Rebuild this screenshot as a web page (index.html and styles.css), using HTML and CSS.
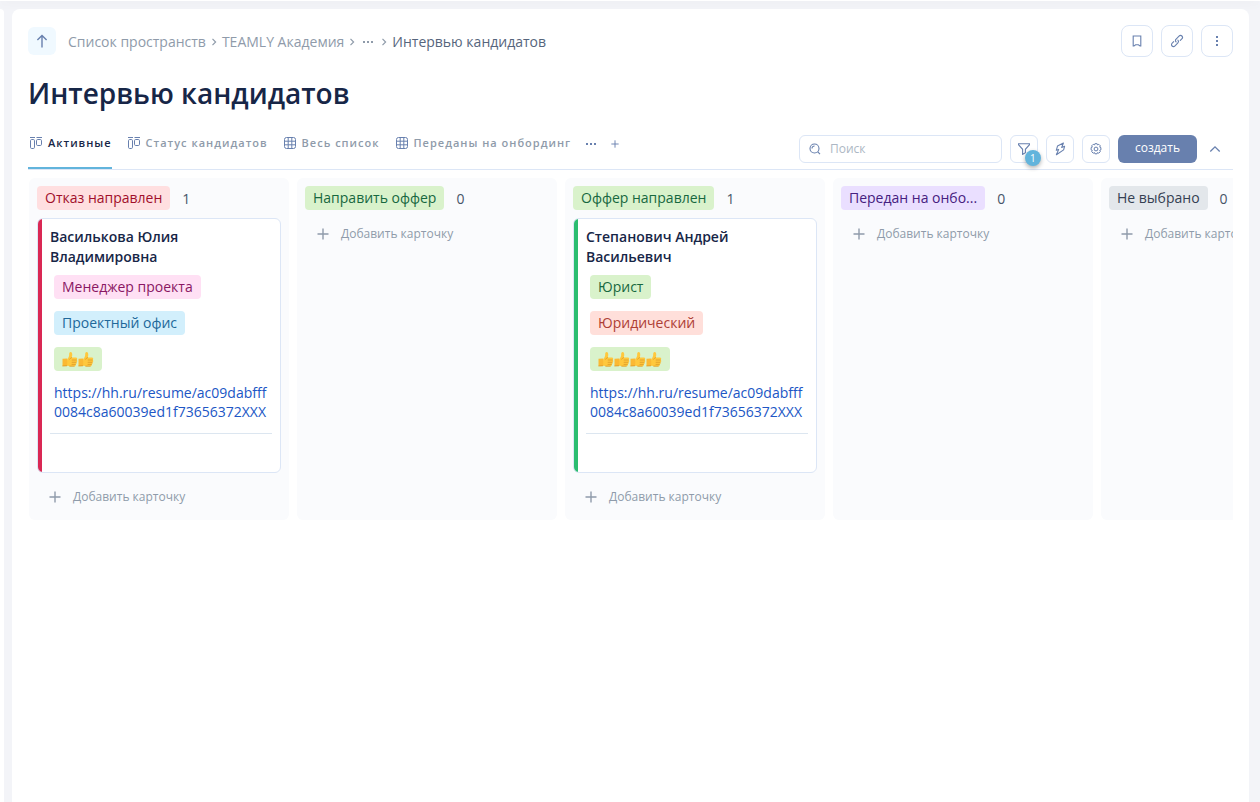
FILE: index.html
```html
<!DOCTYPE html>
<html lang="ru">
<head>
<meta charset="utf-8">
<meta name="viewport" content="width=device-width, initial-scale=1">
<title>Интервью кандидатов</title>
<link rel="stylesheet" href="styles.css">
</head>
<body>
<svg class="sprite" aria-hidden="true">
  <symbol id="chevron" viewBox="0 0 6 8"><path d="M1.5 .8 4.6 4 1.5 7.2" fill="none" stroke="currentColor" stroke-width="1.2"/></symbol>
  <symbol id="dots" viewBox="0 0 12 4"><path d="M1 1h2v2H1zM5 1h2v2H5zM9 1h2v2H9z" fill="currentColor"/></symbol>
  <symbol id="plus" viewBox="0 0 12 12"><path d="M6 .5v11M.5 6h11" fill="none" stroke="currentColor" stroke-width="1.4"/></symbol>
  <symbol id="kanban" viewBox="0 0 12 12"><path d="M0 .5h5M6.500 .5h5.500" stroke="currentColor" fill="none"/><rect x=".5" y="2.500" width="4" height="9" rx="1.200" fill="none" stroke="currentColor"/><rect x="6.500" y="2.500" width="5" height="6" rx="1.200" fill="none" stroke="currentColor"/></symbol>
  <symbol id="grid" viewBox="0 0 12 12"><rect x=".5" y=".5" width="11" height="11" rx="2" fill="none" stroke="currentColor"/><path d="M4.200.5v11M7.800.5v11M.5 4.200h11M.5 7.800h11" stroke="currentColor" fill="none"/></symbol>
  <symbol id="thumb" viewBox="0 0 16 16"><path d="M5.2 8.2C6.7 6.8 7.3 5 7.2 3 7.1.6 9.8.2 10.2 2.9c.2 1.3-.2 2.5-.6 3.7h4.3c1.5 0 1.8 1.9.6 2.3 1.2.5 1 2.2-.3 2.4.8.6.5 1.9-.6 2.1.4.9-.2 1.8-1.3 1.8H7.8c-1.4 0-2-.6-3.2-.7z" fill="#ffc83d"/><path d="M.5 7.8 5.2 7.6v7.3L.5 15.1z" fill="#fbb934"/><path d="M10.2 9h4.2M10.1 11.3h4M10 13.4h3.4M9.6 6.6c-.7.3-1.6.8-2 1.6M7.8 15.2h4.4M.8 15l3.8-.2" fill="none" stroke="#dc9a2a" stroke-width=".8" stroke-linecap="round"/></symbol>
</svg>
<div class="topbar"></div>
<div class="shell">
  <aside class="sidebar"></aside>
  <main class="page">
    <header class="header">
      <button class="up" aria-label="Наверх"><svg width="12" height="14" viewBox="0 0 12 14"><path d="M6 13.5V1.8M1.4 6 6 1.4 10.6 6" fill="none" stroke="currentColor" stroke-width="1.4"/></svg></button>
      <nav class="crumbs" aria-label="Навигация">
        <a href="#">Список пространств</a>
        <svg class="chevron"><use href="#chevron"/></svg>
        <a href="#">TEAMLY Академия</a>
        <svg class="chevron"><use href="#chevron"/></svg>
        <button class="more" aria-label="Ещё"><svg class="dots"><use href="#dots"/></svg></button>
        <svg class="chevron"><use href="#chevron"/></svg>
        <span class="current">Интервью кандидатов</span>
      </nav>
      <div class="actions">
        <button class="action" aria-label="Закладка"><svg width="10" height="12" viewBox="0 0 10 12"><path d="M1.2 1h7.6v10H8L6.4 9.8H3.6L2 11h-.8z" fill="none" stroke="currentColor" stroke-width="1.1"/></svg></button>
        <button class="action" aria-label="Ссылка"><svg width="14" height="14" viewBox="0 0 14 14"><g fill="none" stroke="currentColor" stroke-width="1.1" stroke-linecap="round"><path d="M6.1 7.9c-.9-1-.8-2 0-2.8l2.9-3c1-1 2.2-.8 2.900-.1s.9 1.900-.1 2.900L10.300 6.400"/><path d="M7.900 6.100c.9 1 .8 2 0 2.800l-2.900 3c-1 1-2.200.8-2.900.1s-.9-1.900.1-2.900L3.700 7.600"/></g></svg></button>
        <button class="action" aria-label="Меню"><svg width="4" height="12" viewBox="0 0 4 12"><path d="M1 1h2v2H1zM1 5h2v2H1zM1 9h2v2H1z" fill="currentColor"/></svg></button>
      </div>
    </header>
    <h1 class="title">Интервью кандидатов</h1>
    <div class="toolbar">
      <nav class="tabs" aria-label="Представления">
        <button class="tab active"><svg class="tab-icon"><use href="#kanban"/></svg>Активные</button>
        <button class="tab"><svg class="tab-icon"><use href="#kanban"/></svg>Статус кандидатов</button>
        <button class="tab"><svg class="tab-icon"><use href="#grid"/></svg>Весь список</button>
        <button class="tab"><svg class="tab-icon"><use href="#grid"/></svg>Переданы на онбординг</button>
        <button class="tab extra" aria-label="Ещё"><svg class="dots"><use href="#dots"/></svg></button>
        <button class="tab extra" aria-label="Добавить представление"><svg class="plus-small"><use href="#plus"/></svg></button>
      </nav>
      <div class="tools">
        <label class="search"><svg width="12" height="12" viewBox="0 0 12 12"><circle cx="5.500" cy="5.500" r="4.500" fill="none" stroke="currentColor" stroke-width="1.100"/><path d="m8.800 8.800 2.200 2.400M3 5.600A2.500 2.500 0 0 1 5.600 3" fill="none" stroke="currentColor" stroke-width="1.100"/></svg><input type="text" placeholder="Поиск" aria-label="Поиск"></label>
        <button class="tool" aria-label="Фильтр"><svg width="12" height="12" viewBox="0 0 12 12"><path d="M.5.7h11v1L7.400 6.300v3.400l-2.800 1.700V6.300L.5 1.700z" fill="none" stroke="currentColor" stroke-width="1.100"/></svg><span class="badge">1</span></button>
        <button class="tool" aria-label="Автоматизация"><svg width="12" height="14" viewBox="0 0 12 14"><path d="M9.400 1 3.500 4.100 2.300 8.300l2.400-.9-2.300 5.400 7.200-4.900 1-3.600-2.900 1.200z" fill="none" stroke="currentColor" stroke-width="1.100" stroke-linejoin="round"/></svg></button>
        <button class="tool" aria-label="Настройки"><svg width="12" height="12" viewBox="0 0 12 12"><path d="M4.900.7h2.200l.4 1.200 1.300-.6 1.500 1.500-.6 1.300 1.200.5v2.300l-1.200.5.6 1.300-1.500 1.500-1.300-.6-.4 1.200H4.900l-.4-1.200-1.300.6-1.500-1.500.6-1.300-1.200-.5V4.600l1.200-.5-.6-1.300 1.500-1.500 1.300.6z" fill="none" stroke="currentColor" stroke-width="1"/><circle cx="6" cy="6" r="1.900" fill="none" stroke="currentColor" stroke-width="1"/></svg></button>
        <button class="create">создать</button>
        <button class="collapse" aria-label="Свернуть"><svg width="12" height="8" viewBox="0 0 12 8"><path d="M1.300 6.500 6 1.800l4.700 4.700" fill="none" stroke="currentColor" stroke-width="1.300"/></svg></button>
      </div>
    </div>
    <div class="board">
      <section class="column">
        <div class="column-head"><span class="tag red">Отказ направлен</span><span class="count">1</span></div>
        <article class="card rejected">
          <h2 class="name">Василькова Юлия Владимировна</h2>
          <div class="fields">
            <span class="tag pink">Менеджер проекта</span>
            <span class="tag blue">Проектный офис</span>
            <span class="tag green thumbs" role="img" aria-label="Оценка 2"><svg><use href="#thumb"/></svg><svg><use href="#thumb"/></svg></span>
            <a class="link" href="#">https://hh.ru/resume/ac09dabfff0084c8a60039ed1f73656372XXX</a>
          </div>
        </article>
        <button class="add"><svg><use href="#plus"/></svg>Добавить карточку</button>
      </section>
      <section class="column">
        <div class="column-head"><span class="tag green">Направить оффер</span><span class="count">0</span></div>
        <button class="add"><svg><use href="#plus"/></svg>Добавить карточку</button>
      </section>
      <section class="column">
        <div class="column-head"><span class="tag green">Оффер направлен</span><span class="count">1</span></div>
        <article class="card offered">
          <h2 class="name">Степанович Андрей Васильевич</h2>
          <div class="fields">
            <span class="tag green">Юрист</span>
            <span class="tag coral">Юридический</span>
            <span class="tag green thumbs" role="img" aria-label="Оценка 4"><svg><use href="#thumb"/></svg><svg><use href="#thumb"/></svg><svg><use href="#thumb"/></svg><svg><use href="#thumb"/></svg></span>
            <a class="link" href="#">https://hh.ru/resume/ac09dabfff0084c8a60039ed1f73656372XXX</a>
          </div>
        </article>
        <button class="add"><svg><use href="#plus"/></svg>Добавить карточку</button>
      </section>
      <section class="column">
        <div class="column-head"><span class="tag violet">Передан на онбо...</span><span class="count">0</span></div>
        <button class="add"><svg><use href="#plus"/></svg>Добавить карточку</button>
      </section>
      <section class="column">
        <div class="column-head"><span class="tag gray">Не выбрано</span><span class="count">0</span></div>
        <button class="add"><svg><use href="#plus"/></svg>Добавить карточку</button>
      </section>
    </div>
  </main>
</div>
</body>
</html>
```
FILE: styles.css
```css
* { box-sizing: border-box; }

body {
  margin: 0;
  min-height: 100vh;
  display: flex;
  flex-direction: column;
  overflow: hidden;
  background: #f3f4f8;
  color: #172647;
  font: 14px/20px "Open Sans", "Noto Sans", sans-serif;
}

button {
  display: inline-flex;
  align-items: center;
  justify-content: center;
  padding: 0;
  border: 0;
  background: none;
  color: #6880ae;
  font: inherit;
}

a { text-decoration: none; }
svg { display: block; flex: none; }
.sprite { position: absolute; width: 0; height: 0; }

.topbar {
  height: 1px;
  background: #fff;
  box-shadow: 0 1px 10px rgba(0, 0, 0, .15);
}

.shell {
  flex: 1;
  display: grid;
  grid-template-columns: 4px minmax(0, 1fr);
  gap: 8px;
  padding: 8px 11px 0 0;
}

.sidebar {
  position: relative;
  background: #fff;
  border-radius: 0 8px 0 0;
}

.page {
  position: relative;
  padding: 16px 16px 0;
  background: #fff;
  border-radius: 8px 8px 0 0;
}

.header { display: flex; align-items: center; }

.up {
  width: 28px;
  height: 28px;
  border-radius: 6px;
  background: #f0f9ff;
}

.crumbs {
  display: flex;
  align-items: center;
  gap: 5px;
  margin-left: 12px;
  padding-top: 2px;
  color: #8f9baa;
}
.crumbs a { color: #8f9baa; }
.crumbs .current { color: #56657c; }
.chevron { width: 6px; height: 8px; }
.more { margin: 0 2px; color: #8f9baa; }
.dots { width: 12px; height: 4px; }

.actions { display: flex; gap: 8px; margin-left: auto; }
.action {
  width: 32px;
  height: 32px;
  border: 1px solid #dce6f6;
  border-radius: 8px;
}

.title {
  margin: 16px 0 18px;
  font-size: 28px;
  line-height: 40px;
  font-weight: 600;
}

.toolbar {
  display: flex;
  justify-content: space-between;
  border-bottom: 1px solid #dce6f6;
}

.tabs { display: flex; gap: 14px; }
.tab {
  gap: 6px;
  padding-bottom: 13px;
  border-bottom: 2px solid transparent;
  color: #8f9baa;
  font-size: 11px;
  font-weight: 600;
  letter-spacing: 1px;
  white-space: nowrap;
}
.tab.active { border-color: #62b4dc; color: #172647; }
.tab-icon { width: 12px; height: 12px; margin-left: 2px; color: #6880ae; }
.tab.extra { padding-bottom: 11px; color: #6880ae; }
.plus-small { width: 8px; height: 8px; }

.tools { display: flex; gap: 8px; padding: 4px 8px 6px 0; }
.search {
  display: flex;
  align-items: center;
  gap: 9px;
  width: 203px;
  height: 28px;
  padding: 0 9px;
  border: 1px solid #dce6f6;
  border-radius: 6px;
  color: #6880ae;
}
.search input {
  flex: 1;
  min-width: 0;
  padding: 0;
  border: 0;
  outline: 0;
  background: none;
  font: 12px/20px "Open Sans", "Noto Sans", sans-serif;
}
.search input::placeholder { color: #adb7c4; }

.tool {
  position: relative;
  width: 28px;
  height: 28px;
  border: 1px solid #dce6f6;
  border-radius: 6px;
}
.badge {
  position: absolute;
  top: 14px;
  left: 14px;
  width: 16px;
  height: 16px;
  border-radius: 50%;
  background: #62b4dc;
  box-shadow: 0 2px 4px rgba(0, 0, 0, .3);
  color: #fff;
  font-size: 10px;
  line-height: 16px;
  text-align: center;
}
.create {
  height: 28px;
  padding: 0 17px 2px;
  border-radius: 6px;
  background: #6880ae;
  color: #fff;
  font-size: 12px;
  font-weight: 500;
}
.collapse { width: 20px; }

.board {
  display: flex;
  align-items: stretch;
  gap: 8px;
  padding: 8px 0 0 1px;
  overflow: hidden;
}
.column {
  flex: none;
  width: 260px;
  padding: 8px 8px 12px;
  border-radius: 6px;
  background: #fafbfd;
}
.column-head { display: flex; align-items: center; gap: 12px; }
.count { padding-top: 2px; color: #475569; }

.tag {
  display: inline-flex;
  align-items: center;
  height: 24px;
  padding: 0 8px;
  border-radius: 4px;
  white-space: nowrap;
}
.red { background: #ffdfe0; color: #a10f2b; }
.green { background: #d9f2cb; color: #17683f; }
.pink { background: #ffe0f4; color: #8a1763; }
.blue { background: #d2effc; color: #21689a; }
.coral { background: #ffdfda; color: #ae4035; }
.violet { background: #eadfff; color: #462080; }
.gray { background: #e3e7eb; color: #354052; }
.thumbs svg { width: 16px; height: 16px; }

.card {
  margin-top: 8px;
  padding: 8px 8px 38px 12px;
  border: 1px solid #dce6f6;
  border-radius: 6px;
  background: linear-gradient(to right, var(--mark) 4px, #fff 4px);
}
.rejected { --mark: #da2854; }
.offered { --mark: #2bbd70; }
.name { margin: 0; font-size: 14px; line-height: 20px; font-weight: 600; }
.fields {
  display: flex;
  flex-direction: column;
  align-items: flex-start;
  gap: 12px;
  padding: 8px 4px 12px;
  border-bottom: 1px solid #dce6f0;
}
.link { color: #2056c5; line-height: 19px; overflow-wrap: anywhere; }

.add {
  gap: 12px;
  margin: 14px 0 0 12px;
  color: #8f9baa;
  font-size: 12px;
  white-space: nowrap;
}
.add svg { width: 12px; height: 12px; }
```
